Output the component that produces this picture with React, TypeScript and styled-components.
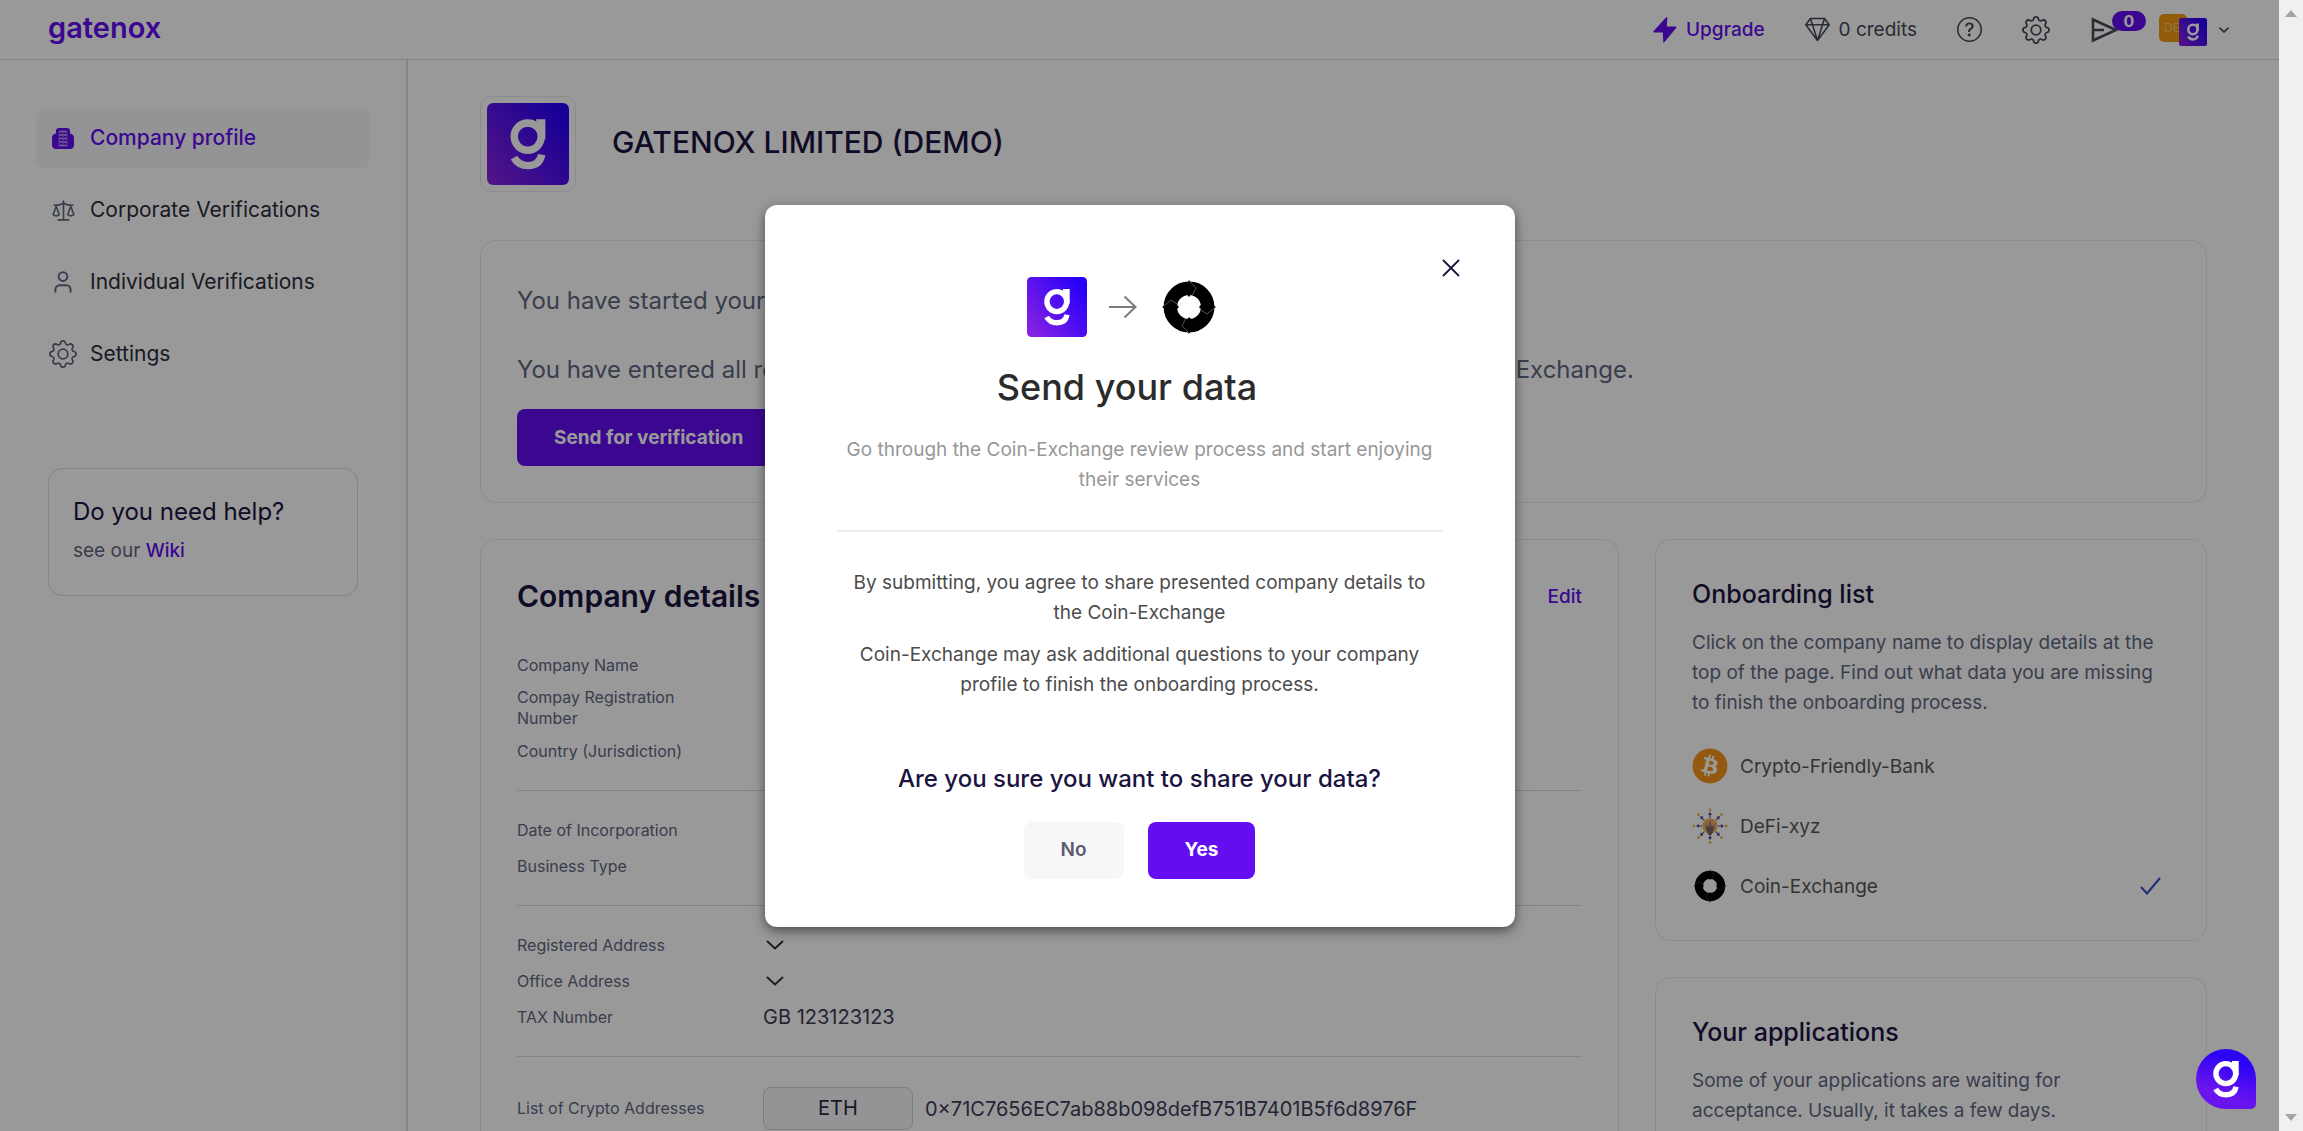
import React from "react";
import styled, { createGlobalStyle } from "styled-components";
import { Scale, User } from "lucide-react";
import { BsGear, BsGem, BsQuestionCircle } from "react-icons/bs";
import { FaBitcoin } from "react-icons/fa";

const color = {
  purple: "#650df1",
  navy: "#1b1340",
  ink: "#2c2c3a",
  slate: "#5f6880",
  grey: "#575757",
  line: "#e9e9ed",
};

const GlobalStyle = createGlobalStyle`
  *, *::before, *::after { box-sizing: border-box; }
  body { margin: 0; background: #fff; color: ${color.ink}; font-family: Inter, "Liberation Sans", sans-serif; }
  h1, h2, h3, p, ul, dl, dd { margin: 0; padding: 0; }
  ul { list-style: none; }
  a { color: inherit; text-decoration: none; }
  button { font: inherit; color: inherit; border: 0; background: none; padding: 0; cursor: pointer; }
  svg { display: block; flex: none; }
`;

/* ---------- window ---------- */

const Window = styled.div`
  display: flex;
  height: 100vh;
  overflow: hidden;
`;

const Viewport = styled.div`
  position: relative;
  flex: 1;
  min-width: 0;
  overflow: hidden;
`;

const ScrollTrack = styled.div`
  flex: none;
  width: 24px;
  padding: 10px 0;
  display: flex;
  flex-direction: column;
  align-items: center;
  justify-content: space-between;
  background: #f0f0f0;
  color: #a3a3a3;
`;

/* ---------- header ---------- */

const Header = styled.header`
  display: flex;
  align-items: center;
  justify-content: space-between;
  height: 60px;
  padding: 0 50px 0 48px;
  border-bottom: 1px solid #dcdce0;
`;

const Wordmark = styled.a`
  padding-bottom: 3px;
  font-size: 29px;
  line-height: 36px;
  font-weight: 600;
  color: ${color.purple};
`;

const Tools = styled.div`
  display: flex;
  align-items: center;
  gap: 40px;
  color: #484858;
`;

const Tool = styled.button<{ $accent?: boolean }>`
  display: flex;
  align-items: center;
  gap: 9px;
  font-size: 19px;
  line-height: 30px;
  font-weight: ${(p) => (p.$accent ? 500 : 400)};
  color: ${(p) => (p.$accent ? color.purple : "inherit")};
`;

const Outbox = styled(Tool)`
  position: relative;
`;

const Count = styled.span`
  position: absolute;
  left: 22px;
  top: -6px;
  width: 34px;
  border-radius: 10px;
  background: ${color.purple};
  color: #fff;
  font-size: 16px;
  line-height: 20px;
  font-weight: 700;
  text-align: center;
`;

const Account = styled(Tool)`
  gap: 12px;
`;

const Avatars = styled.span`
  display: flex;
  align-items: flex-start;
`;

const Initials = styled.span`
  width: 28px;
  height: 28px;
  margin-right: -8px;
  padding-left: 5px;
  border-radius: 5px;
  background: #f39a12;
  color: #f7c36c;
  font-size: 12px;
  line-height: 28px;
  text-align: left;
`;

const SmallMark = styled.span`
  position: relative;
  margin-top: 4px;
`;

/* ---------- sidebar ---------- */

const Body = styled.div`
  display: flex;
  align-items: stretch;
  min-height: calc(100vh - 60px);
`;

const Sidebar = styled.aside`
  flex: none;
  width: 408px;
  padding: 48px 36px;
  border-right: 2px solid #dedee3;
`;

const Nav = styled.nav`
  display: flex;
  flex-direction: column;
  gap: 12px;
`;

const NavLink = styled.a<{ $active?: boolean }>`
  display: flex;
  align-items: center;
  gap: 12px;
  height: 60px;
  padding: 0 12px;
  border-radius: 8px;
  font-size: 21px;
  line-height: 30px;
  font-weight: ${(p) => (p.$active ? 500 : 400)};
  color: ${(p) => (p.$active ? color.purple : color.ink)};
  background: ${(p) => (p.$active ? "#f7f7fb" : "transparent")};
`;

const NavIcon = styled.span`
  display: flex;
  justify-content: center;
  width: 30px;
  color: ${color.slate};
`;

const Help = styled.section`
  margin: 84px 12px 0;
  padding: 25px 24px 29px;
  border: 1px solid #dadae3;
  border-radius: 14px;
  font-size: 19px;
  line-height: 30px;
  color: ${color.slate};
`;

const HelpTitle = styled.h3`
  margin-bottom: 6px;
  font-size: 24px;
  line-height: 36px;
  font-weight: 400;
  color: ${color.navy};
`;

const Accent = styled.a`
  color: ${color.purple};
  font-weight: 500;
`;

/* ---------- main column ---------- */

const Main = styled.main`
  flex: 1;
  min-width: 0;
  padding: 36px 72px;
`;

const Company = styled.div`
  display: flex;
  align-items: center;
  gap: 36px;
  margin-bottom: 48px;
`;

const LogoFrame = styled.div`
  padding: 6px;
  border: 1px solid ${color.line};
  border-radius: 12px;
`;

const CompanyName = styled.h1`
  padding-bottom: 4px;
  font-size: 30px;
  line-height: 40px;
  font-weight: 500;
  color: ${color.navy};
`;

const Card = styled.section`
  min-width: 0;
  padding: 36px;
  border: 1px solid ${color.line};
  border-radius: 16px;
`;

const Status = styled(Card)`
  margin-bottom: 36px;
`;

const StatusText = styled.p`
  margin-bottom: 21px;
  font-size: 24px;
  line-height: 48px;
  color: ${color.slate};

  & + & { margin-bottom: 15px; }
`;

const Button = styled.button<{ $plain?: boolean }>`
  height: 57px;
  padding: 0 37px;
  border-radius: 8px;
  font-size: 19px;
  line-height: 30px;
  font-weight: ${(p) => (p.$plain ? 600 : 700)};
  color: ${(p) => (p.$plain ? "#5c5c6b" : "#fff")};
  background: ${(p) => (p.$plain ? "#f7f7fa" : color.purple)};
`;

const Columns = styled.div`
  display: grid;
  grid-template-columns: minmax(0, 1fr) 552px;
  align-items: start;
  gap: 36px;
`;

const Stack = styled.div`
  display: grid;
  gap: 36px;
`;

const CardHead = styled.div`
  display: flex;
  align-items: center;
  justify-content: space-between;
  margin-bottom: 34px;
  font-size: 19px;
`;

const DetailsTitle = styled.h2`
  font-size: 30px;
  line-height: 40px;
  font-weight: 600;
  color: ${color.navy};
`;

const Details = styled.dl`
  display: grid;
  gap: 6px;
  padding-bottom: 24px;

  & + & {
    padding-top: 24px;
    border-top: 1px solid #dcdce0;
  }

  & + &:last-child { padding-top: 30px; }
`;

const Detail = styled.div`
  display: grid;
  grid-template-columns: 180px minmax(0, 1fr);
  column-gap: 66px;
  align-items: center;
  min-height: 30px;
`;

const Term = styled.dt`
  padding: 1px 0;
  font-size: 16px;
  line-height: 21px;
  color: ${color.slate};
  white-space: nowrap;
`;

const Value = styled.dd`
  display: flex;
  align-items: center;
  gap: 12px;
  font-size: 20px;
  line-height: 30px;
  color: #3d3c57;
`;

const Expand = styled.button`
  display: flex;
  align-items: center;
  height: 30px;
  padding-left: 3px;
  color: ${color.ink};
`;

const Ticker = styled.span`
  width: 150px;
  border: 1px solid #d0d0dc;
  border-radius: 8px;
  background: #f7f7fb;
  color: ${color.ink};
  line-height: 41px;
  text-align: center;
`;

/* ---------- right column ---------- */

const SideTitle = styled.h2`
  margin-bottom: 16px;
  font-size: 25px;
  line-height: 36px;
  font-weight: 500;
  color: ${color.navy};
`;

const SideText = styled.p`
  max-width: 474px;
  font-size: 19px;
  line-height: 30px;
  color: ${color.slate};
`;

const Partners = styled.ul`
  display: grid;
  gap: 24px;
  margin: 30px 0 0;
`;

const Partner = styled.button`
  display: flex;
  align-items: center;
  gap: 12px;
  width: 100%;
  height: 36px;
  padding-right: 9px;
  font-size: 19px;
  text-align: left;
  color: ${color.grey};
`;

const PartnerName = styled.span`
  flex: 1;
`;

const BitcoinBadge = styled.span`
  border-radius: 50%;
  background: radial-gradient(#fff 60%, transparent 62%);
  color: #f7931a;
`;

/* ---------- dialog ---------- */

const Overlay = styled.div`
  position: absolute;
  inset: 0;
  display: flex;
  align-items: center;
  justify-content: center;
  background: rgba(0, 0, 0, 0.4);
`;

const Dialog = styled.section`
  width: 750px;
  padding: 48px 0;
  border-radius: 12px;
  background: #fff;
  box-shadow: 0 4px 12px rgba(0, 0, 0, 0.5);
  text-align: center;
`;

const DialogHead = styled.div`
  display: flex;
  align-items: flex-start;
  padding: 0 49px 0 54px;
`;

const DialogIntro = styled.div`
  flex: 1;
  padding-top: 24px;
`;

const Close = styled.button`
  display: flex;
  align-items: center;
  justify-content: center;
  width: 30px;
  height: 30px;
  color: ${color.navy};
`;

const Transfer = styled.div`
  display: grid;
  grid-template-columns: 60px 28px 60px;
  align-items: center;
  justify-content: center;
  column-gap: 22px;
  padding-right: 8px;
  margin-bottom: 24px;
  color: #7c7c7c;
`;

const DialogTitle = styled.h2`
  margin-bottom: 22px;
  font-size: 36px;
  line-height: 52px;
  font-weight: 500;
  color: #2b2b2b;
`;

const Copy = styled.div`
  display: grid;
  gap: 12px;
  width: 600px;
  margin: 0 auto;
  font-size: 19px;
  line-height: 30px;
  color: #4c4c4c;
`;

const Lead = styled(Copy)`
  color: #979797;
`;

const Rule = styled.hr`
  width: 606px;
  height: 2px;
  margin: 35px auto 36px;
  border: 0;
  background: #ececec;
`;

const Question = styled.h3`
  margin: 61px 0 25px;
  font-size: 24px;
  line-height: 36px;
  font-weight: 500;
  color: ${color.navy};
`;

const Actions = styled.div`
  display: flex;
  justify-content: center;
  gap: 24px;
`;

const ChatButton = styled.button`
  position: absolute;
  right: 23px;
  bottom: 22px;
  display: flex;
  width: 60px;
  height: 60px;
  align-items: center;
  justify-content: center;
  border-radius: 50% 50% 5px 50%;
  background: linear-gradient(200deg, #2e04f5 25%, #6a14ee 70%, #6610f0);
`;

/* ---------- drawings ---------- */

const GlyphStrokes = () => (
  <g fill="none" stroke="#fff" strokeWidth="5.4">
    <ellipse cx="29.8" cy="24.6" rx="9.9" ry="10" />
    <path d="M40 12V26.5M36 14.6H42.7" />
    <path d="M19.7 40Q23 45.8 30 45.8Q38.6 45.8 40 37.8" />
  </g>
);

const GMark = ({ size, id }: { size: number; id: string }) => (
  <svg width={size} height={size} viewBox="0 0 60 60" aria-hidden="true">
    <defs>
      <linearGradient id={id} x1="0" y1="1" x2="1" y2="0.25">
        <stop offset="0" stopColor="#8f24e0" />
        <stop offset="0.5" stopColor="#5a12ee" />
        <stop offset="1" stopColor="#2600fa" />
      </linearGradient>
    </defs>
    <rect width="60" height="60" rx="4.5" fill={`url(#${id})`} />
    <GlyphStrokes />
  </svg>
);

const GBubble = () => (
  <svg width="60" height="60" viewBox="0 0 60 60" aria-hidden="true">
    <GlyphStrokes />
  </svg>
);

const Bolt = () => (
  <svg width="24" height="26" viewBox="0 0 24 26" fill="currentColor" aria-hidden="true">
    <path d="M13 0.5Q14.5 -0.5 14.300 1.500L13.800 9.500H22.500Q24 9.800 23.200 11L11.500 25Q10.300 26.500 10.200 24.500L9.800 15.500H1.200Q-0.300 15.200 0.600 14Z" />
  </svg>
);

const CoinRing = ({ size }: { size: number }) => (
  <svg width={size} height={size} viewBox="0 0 60 60" aria-hidden="true">
    <circle cx="30" cy="30" r="18.7" fill="none" stroke="#000" strokeWidth="13.4" />
    <path
      d="M30 3L34 8H28ZM57 30L52 34V27ZM30 57L26 52H33ZM3 30L8 26V33ZM30 20L26.5 16H33ZM40 30L44 25.5V34ZM30 40L34 44H27ZM20 30L16 34V26Z"
      fill="#000"
    />
    <path
      d="M30 3.5L37 11L33 19.5M56 30.5L48 37L40.5 32M30 56L23 49L27 41M4 29.5L12 23L19.5 28"
      fill="none"
      stroke="#777"
      strokeWidth="0.7"
    />
  </svg>
);

const spokes = [0, 45, 90, 135, 180, 225, 270, 315];

const DefiMark = () => (
  <svg width="36" height="36" viewBox="0 0 36 36" aria-hidden="true">
    {spokes.map((angle) => (
      <g key={angle} transform={`rotate(${angle} 18 18)`}>
        <path d="M18 10V6" stroke="#4b4690" strokeWidth="1" />
        <path d="M18 4L20 7H16Z" fill="#4b4690" />
        <circle cx="18" cy="1.8" r="1.5" fill="#eebc52" />
      </g>
    ))}
    <circle cx="18" cy="18" r="7.8" fill="#f2b452" />
    <circle cx="18" cy="18" r="5.2" fill="#e8a08a" />
    <path d="M13 15L15.5 20L16 16L17.5 20V13H18.5V20L20 16L20.5 20L23 15L21.5 22L19.500 27H16.500L14.500 22Z" fill="#75646c" />
  </svg>
);

const Building = () => (
  <svg width="22" height="21" viewBox="0 0 22 21" aria-hidden="true">
    <path
      d="M7 0H15Q18 0 18 3V5.5Q22 6 22 10V17Q22 21 18 21H4Q0 21 0 17V10Q0 6 4 5.5V3Q4 0 7 0Z"
      fill={color.purple}
    />
    <path d="M7 3.5H15M7 7H15M7 10.5H15M7 14H15M7 17.5H15" stroke="#c5a8f7" strokeWidth="1.4" />
    <path d="M7 3V18M15 3V18M11 4V17" stroke="#9a68f2" strokeWidth="1" />
  </svg>
);

const SendIcon = () => (
  <svg width="29" height="26" viewBox="0 0 29 26" fill="none" stroke="currentColor" strokeWidth="2.6" aria-hidden="true">
    <path d="M3 2.5L26 13L3 23.5V13V2.5ZM3 13H14" />
  </svg>
);

const Chevron = ({ width }: { width: number }) => (
  <svg width={width} height={width / 2 + 1} viewBox="0 0 18 10" fill="none" stroke="currentColor" strokeWidth={width < 12 ? 3 : 1.8} aria-hidden="true">
    <path d="M1 1L9 8.5L17 1" />
  </svg>
);

const Arrow = () => (
  <svg width="28" height="24" viewBox="0 0 28 24" fill="none" stroke="currentColor" strokeWidth="2" aria-hidden="true">
    <path d="M0 12H26M15.5 1.5L26.5 12L15.5 22.5" />
  </svg>
);

const Cross = () => (
  <svg width="18" height="18" viewBox="0 0 18 18" stroke="currentColor" strokeWidth="1.8" aria-hidden="true">
    <path d="M1 1L17 17M17 1L1 17" />
  </svg>
);

const Tick = () => (
  <svg width="21" height="18" viewBox="0 0 21 18" fill="none" stroke="#2b50c8" strokeWidth="2" aria-hidden="true">
    <path d="M1 10L7 16.5L20 1" />
  </svg>
);

const Caret = ({ up }: { up?: boolean }) => (
  <svg width="12" height="7" viewBox="0 0 12 7" fill="currentColor" aria-hidden="true">
    <path d={up ? "M0 7L6 0L12 7Z" : "M0 0H12L6 7Z"} />
  </svg>
);

/* ---------- page ---------- */

export default function App() {
  return (
    <>
      <GlobalStyle />
      <Window>
        <Viewport>
          <Header>
            <Wordmark href="#">gatenox</Wordmark>
            <Tools>
              <Tool $accent>
                <Bolt />
                Upgrade
              </Tool>
              <Tool>
                <BsGem size={25} />0 credits
              </Tool>
              <Tool aria-label="Help">
                <BsQuestionCircle size={25} />
              </Tool>
              <Tool aria-label="Settings">
                <BsGear size={28} />
              </Tool>
              <Outbox aria-label="Sent requests">
                <SendIcon />
                <Count>0</Count>
              </Outbox>
              <Account aria-label="Account">
                <Avatars>
                  <Initials>DE</Initials>
                  <SmallMark>
                    <GMark size={28} id="mark-small" />
                  </SmallMark>
                </Avatars>
                <Chevron width={10} />
              </Account>
            </Tools>
          </Header>

          <Body>
            <Sidebar>
              <Nav>
                <NavLink href="#" $active>
                  <NavIcon><Building /></NavIcon>
                  Company profile
                </NavLink>
                <NavLink href="#">
                  <NavIcon><Scale size={25} strokeWidth={1.5} /></NavIcon>
                  Corporate Verifications
                </NavLink>
                <NavLink href="#">
                  <NavIcon><User size={26} strokeWidth={1.8} /></NavIcon>
                  Individual Verifications
                </NavLink>
                <NavLink href="#">
                  <NavIcon><BsGear size={28} /></NavIcon>
                  Settings
                </NavLink>
              </Nav>
              <Help>
                <HelpTitle>Do you need help?</HelpTitle>
                <p>see our <Accent href="#">Wiki</Accent></p>
              </Help>
            </Sidebar>

            <Main>
              <Company>
                <LogoFrame>
                  <GMark size={82} id="mark-large" />
                </LogoFrame>
                <CompanyName>GATENOX LIMITED (DEMO)</CompanyName>
              </Company>

              <Status>
                <StatusText>You have started your onboarding process.</StatusText>
                <StatusText>
                  You have entered all required data. You can now send your company profile to the Coin-Exchange.
                </StatusText>
                <Button>Send for verification</Button>
              </Status>

              <Columns>
                <Card>
                  <CardHead>
                    <DetailsTitle>Company details</DetailsTitle>
                    <Accent href="#">Edit</Accent>
                  </CardHead>
                  <Details>
                    <Detail><Term>Company Name</Term></Detail>
                    <Detail><Term>Compay Registration<br />Number</Term></Detail>
                    <Detail><Term>Country (Jurisdiction)</Term></Detail>
                  </Details>
                  <Details>
                    <Detail><Term>Date of Incorporation</Term></Detail>
                    <Detail><Term>Business Type</Term></Detail>
                  </Details>
                  <Details>
                    <Detail>
                      <Term>Registered Address</Term>
                      <Value><Expand aria-label="Show registered address"><Chevron width={18} /></Expand></Value>
                    </Detail>
                    <Detail>
                      <Term>Office Address</Term>
                      <Value><Expand aria-label="Show office address"><Chevron width={18} /></Expand></Value>
                    </Detail>
                    <Detail>
                      <Term>TAX Number</Term>
                      <Value>GB 123123123</Value>
                    </Detail>
                  </Details>
                  <Details>
                    <Detail>
                      <Term>List of Crypto Addresses</Term>
                      <Value>
                        <Ticker>ETH</Ticker>
                        0×71C7656EC7ab88b098defB751B7401B5f6d8976F
                      </Value>
                    </Detail>
                  </Details>
                </Card>

                <Stack>
                  <Card>
                    <SideTitle>Onboarding list</SideTitle>
                    <SideText>
                      Click on the company name to display details at the top of the page. Find out what data you
                      are missing to finish the onboarding process.
                    </SideText>
                    <Partners>
                      <li>
                        <Partner>
                          <BitcoinBadge><FaBitcoin size={36} /></BitcoinBadge>
                          <PartnerName>Crypto-Friendly-Bank</PartnerName>
                        </Partner>
                      </li>
                      <li>
                        <Partner>
                          <DefiMark />
                          <PartnerName>DeFi-xyz</PartnerName>
                        </Partner>
                      </li>
                      <li>
                        <Partner>
                          <CoinRing size={36} />
                          <PartnerName>Coin-Exchange</PartnerName>
                          <Tick />
                        </Partner>
                      </li>
                    </Partners>
                  </Card>
                  <Card>
                    <SideTitle>Your applications</SideTitle>
                    <SideText>
                      Some of your applications are waiting for
                      <br />
                      acceptance. Usually, it takes a few days.
                    </SideText>
                  </Card>
                </Stack>
              </Columns>
            </Main>
          </Body>

          <Overlay>
            <Dialog role="dialog" aria-modal="true" aria-labelledby="send-title">
              <DialogHead>
                <DialogIntro>
                  <Transfer>
                    <GMark size={60} id="mark-dialog" />
                    <Arrow />
                    <CoinRing size={60} />
                  </Transfer>
                  <DialogTitle id="send-title">Send your data</DialogTitle>
                </DialogIntro>
                <Close aria-label="Close"><Cross /></Close>
              </DialogHead>
              <Lead>
                <p>Go through the Coin-Exchange review process and start enjoying their services</p>
              </Lead>
              <Rule />
              <Copy>
                <p>By submitting, you agree to share presented company details to the Coin-Exchange</p>
                <p>Coin-Exchange may ask additional questions to your company profile to finish the onboarding process.</p>
              </Copy>
              <Question>Are you sure you want to share your data?</Question>
              <Actions>
                <Button $plain>No</Button>
                <Button>Yes</Button>
              </Actions>
            </Dialog>
          </Overlay>

          <ChatButton aria-label="Open chat"><GBubble /></ChatButton>
        </Viewport>
        <ScrollTrack>
          <Caret up />
          <Caret />
        </ScrollTrack>
      </Window>
    </>
  );
}
